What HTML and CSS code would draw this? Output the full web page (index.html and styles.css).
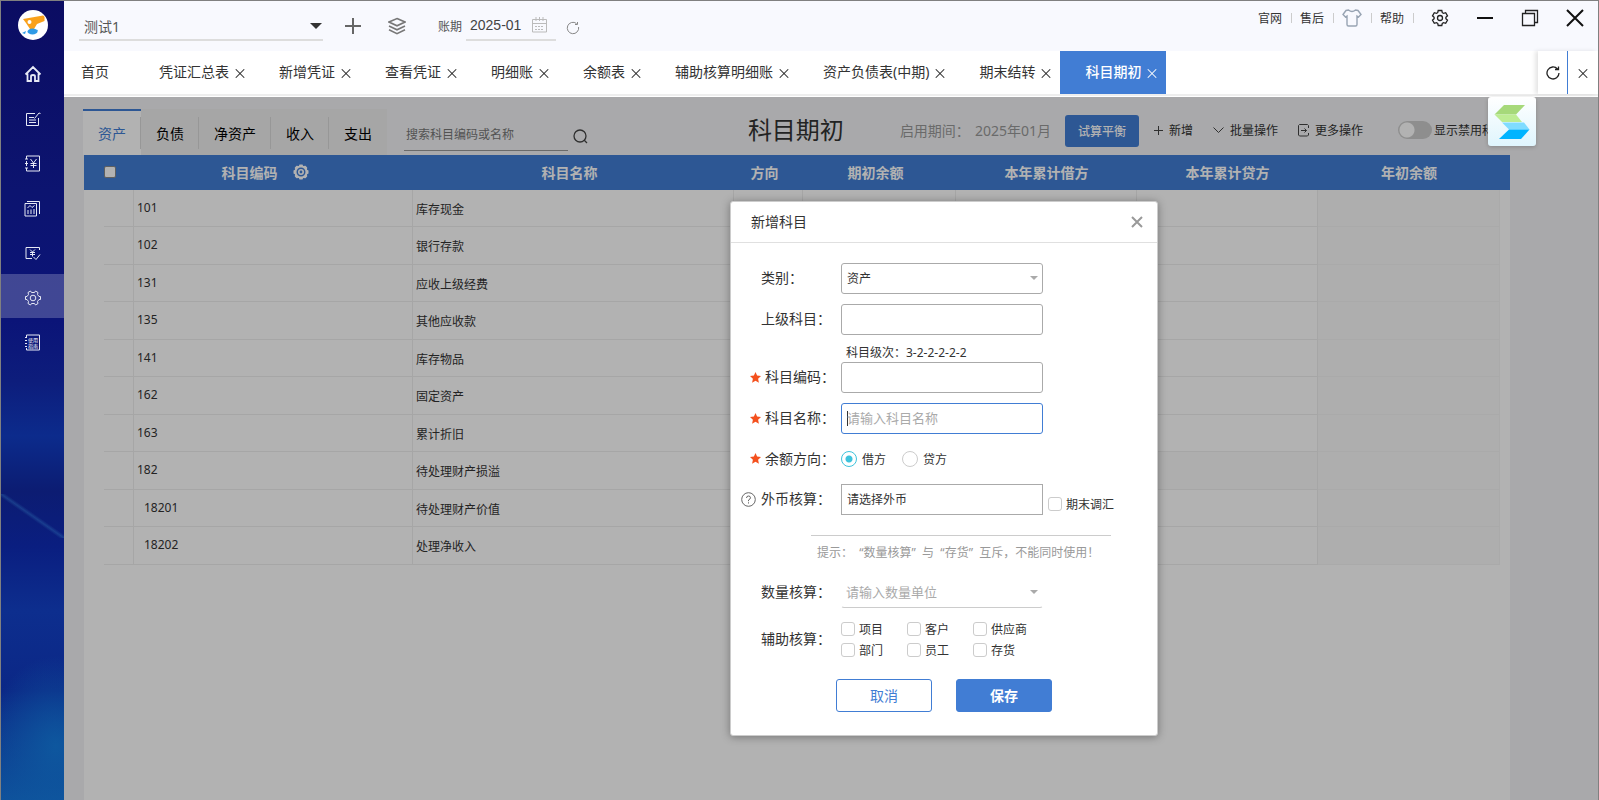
FILE: index.html
```html
<!DOCTYPE html>
<html lang="zh-CN">
<head>
  <meta charset="UTF-8">
  <meta name="viewport" content="width=device-width, initial-scale=1.0">
  <title>科目期初</title>
  <link rel="stylesheet" href="styles.css">
</head>
<body>
  <div class="app">
    <!-- 左侧导航 -->
    <aside class="sidebar">
      <a href="#" class="logo" aria-label="首页">
        <svg width="30" height="30" viewBox="0 0 30 30">
          <circle cx="15" cy="15" r="15" fill="#fff"/>
          <path d="M5 9 L25 5.5 Q27 6 26.5 9 L26.5 11 L19 14 L16 19 Q14 21 12 19 L8 13 Z" fill="#f9a11b"/>
          <circle cx="11.5" cy="12" r="2" fill="#fff"/>
          <ellipse cx="14.5" cy="21.5" rx="5" ry="3" fill="#2f9be6"/>
          <path d="M4 23 L8 21 L7 24 Z M15 19 L20 20 L18 23 Z" fill="#2f9be6"/>
        </svg>
      </a>
      <nav class="side-nav">
        <a href="#" aria-label="主页">
          <svg class="icon" width="18" height="18" viewBox="0 0 18 18" stroke-width="1.8"><path d="M1.5 9.5 L9 2 L16.500 9.500 M3.500 8.500 V16 H7 V11.500 Q7 10 9 10 Q11 10 11 11.500 V16 H14.500 V8.500"/></svg>
        </a>
        <a href="#" aria-label="凭证">
          <svg class="icon" width="16" height="16" viewBox="0 0 16 16"><path d="M10 2.500 H1.500 V14.500 H13.500 V7 M4 6.500 H9 M4 9 H11 M4 11.500 H11 M9.500 7.500 L14 2 L15.500 2.500"/></svg>
        </a>
        <a href="#" aria-label="账簿">
          <svg class="icon" width="17" height="17" viewBox="0 0 17 17"><path d="M2.500 4 V1 H15.500 V16 H2.500 V13 M2.500 6 V11 M1 4 H4 M1 8.500 H4 M1 13 H4 M6.500 4 L9.500 8 L12.500 4 M9.500 8 V13 M6.500 8.500 H12.500 M6.500 10.500 H12.500"/></svg>
        </a>
        <a href="#" aria-label="报表">
          <svg class="icon" width="17" height="17" viewBox="0 0 17 17"><path d="M1 3.500 H12.500 V16 H1 Z M3 1.500 H15.500 V14 M3.500 8 L6 5.500 L8 7.500 L10.500 5.500 M4 10 V14 M7 9.500 V14 M10 9 V14"/></svg>
        </a>
        <a href="#" aria-label="结账">
          <svg class="icon" width="17" height="17" viewBox="0 0 17 17"><path d="M8 13.500 H2 V2.500 H15.500 V5 M9.500 12 L12 14.500 L16 9.500 M6 4.500 L8.500 7 L11 4.500 M8.500 7 V11.500 M6 7.500 H11 M6 9.500 H11"/></svg>
        </a>
        <a href="#" class="active" aria-label="设置">
          <svg class="icon" width="18" height="18" viewBox="0 0 18 18"><path d="M6.500 2 L7.500 3.500 H10.500 L11.500 2 L14 3.500 L13.500 5.500 L15 7.500 H16.500 V10.500 H15 L13.500 12.500 L14 14.500 L11.500 16 L10.500 14.500 H7.500 L6.500 16 L4 14.500 L4.500 12.500 L3 10.500 H1.500 V7.500 H3 L4.500 5.500 L4 3.500 Z"/><circle cx="9" cy="9" r="2.800"/></svg>
        </a>
        <a href="#" aria-label="使用指南">
          <svg class="icon" width="17" height="17" viewBox="0 0 17 17"><path d="M2.500 3 V1 H15.500 V16 H2.500 V14 M1 3.500 H3 M1 6.500 H3 M1 9.500 H3 M1 12.500 H3"/><text x="4" y="7.500">使用</text><text x="4" y="13.500">指南</text></svg>
        </a>
      </nav>
    </aside>

    <div class="main">
      <!-- 顶栏 -->
      <header class="topbar">
        <label class="account-select">
          <select aria-label="账套"><option>测试1</option></select>
        </label>
        <button class="icon-btn add-btn" aria-label="新建">
          <svg width="16" height="16" viewBox="0 0 16 16" stroke="#666" stroke-width="2"><path d="M8 0 V16 M0 8 H16"/></svg>
        </button>
        <button class="icon-btn layer-btn" aria-label="账套列表">
          <svg width="18" height="18" viewBox="0 0 18 18" fill="none" stroke="#777" stroke-width="1.6"><path d="M9 1.500 L17 5 L9 8.800 L1 5 Z M1 9 L9 12.800 L17 9 M1 12.800 L9 16.600 L17 12.800"/></svg>
        </button>
        <label class="period-label" for="period">账期</label>
        <div class="period">
          <input id="period" type="text" value="2025-01">
          <svg width="15" height="16" viewBox="0 0 15 16" fill="none" stroke="#bbb"><path d="M0.500 2.500 H14.500 V15 H0.500 Z M0.500 6.500 H14.500 M4 0 V4 M7.500 0 V4 M11 0 V4"/><path d="M3 9.500 H12 M3 12.500 H12" stroke-dasharray="2 1"/></svg>
        </div>
        <button class="icon-btn reload-btn" aria-label="刷新账期">
          <svg width="14" height="14" viewBox="0 0 14 14" fill="none" stroke="#888"><path d="M10.500 2.500 A5.700 5.700 0 1 0 12.600 6 M9 3.500 H11.500 V1"/></svg>
        </button>
        <div class="top-links">
          <a href="#">官网</a>
          <a href="#">售后</a>
          <a href="#" aria-label="换肤"><svg width="20" height="18" viewBox="0 0 20 18" fill="none" stroke="#98a4b3" stroke-width="1.400"><path d="M6.500 1 Q10 4 13.500 1 L16 1.500 L19 5.500 L16.500 8 L15 7 V15.500 Q15 17 13.500 17 H6.500 Q5 17 5 15.500 V7 L3.500 8 L1 5.500 L4 1.500 Z"/></svg></a>
          <a href="#">帮助</a>
        </div>
        <div class="window-btns">
          <button class="icon-btn" aria-label="设置">
            <svg width="18" height="18" viewBox="0 0 18 18" fill="none" stroke="#222" stroke-width="1.300"><path d="M7.200 1.500 H10.800 L11.300 3.700 L12.500 4.400 L14.700 3.700 L16.500 6.800 L14.900 8.300 V9.700 L16.500 11.200 L14.700 14.300 L12.500 13.600 L11.300 14.300 L10.800 16.500 H7.200 L6.700 14.300 L5.500 13.600 L3.300 14.300 L1.500 11.200 L3.100 9.700 V8.300 L1.500 6.800 L3.300 3.700 L5.500 4.400 L6.700 3.700 Z"/><circle cx="9" cy="9" r="2.500"/></svg>
          </button>
          <button class="icon-btn" aria-label="最小化">
            <svg width="18" height="18" viewBox="0 0 18 18" stroke="#111" stroke-width="2"><path d="M1 9 H17"/></svg>
          </button>
          <button class="icon-btn" aria-label="还原">
            <svg width="18" height="18" viewBox="0 0 18 18" fill="none" stroke="#222" stroke-width="1.300"><path d="M1.500 4.500 H13.500 V16.500 H1.500 Z M4.500 4.500 V1.500 H16.500 V13.500 H13.500"/></svg>
          </button>
          <button class="icon-btn" aria-label="关闭">
            <svg width="18" height="18" viewBox="0 0 18 18" stroke="#111" stroke-width="2"><path d="M1 1 L17 17 M17 1 L1 17"/></svg>
          </button>
        </div>
      </header>

      <!-- 页签 -->
      <div class="tabs">
        <div class="tab home"><a href="#">首页</a></div>
        <div class="tab"><a href="#">凭证汇总表</a><button class="close" aria-label="关闭"></button></div>
        <div class="tab"><a href="#">新增凭证</a><button class="close" aria-label="关闭"></button></div>
        <div class="tab"><a href="#">查看凭证</a><button class="close" aria-label="关闭"></button></div>
        <div class="tab"><a href="#">明细账</a><button class="close" aria-label="关闭"></button></div>
        <div class="tab"><a href="#">余额表</a><button class="close" aria-label="关闭"></button></div>
        <div class="tab"><a href="#">辅助核算明细账</a><button class="close" aria-label="关闭"></button></div>
        <div class="tab"><a href="#">资产负债表(中期)</a><button class="close" aria-label="关闭"></button></div>
        <div class="tab"><a href="#">期末结转</a><button class="close" aria-label="关闭"></button></div>
        <div class="tab current"><a href="#">科目期初</a><button class="close" aria-label="关闭"></button></div>
        <div class="tab-tools">
          <button class="icon-btn" aria-label="刷新">
            <svg width="14" height="14" viewBox="0 0 14 14" fill="none" stroke="#222" stroke-width="1.300"><path d="M11.500 3 A6 6 0 1 0 13 7 M9 3.500 H12.500 V0.500"/></svg>
          </button>
          <button class="close close-all" aria-label="关闭全部"></button>
        </div>
      </div>

      <div class="content">
        <div class="toolbar">
          <div class="type-tabs">
            <button class="on">资产</button>
            <button>负债</button>
            <button>净资产</button>
            <button>收入</button>
            <button>支出</button>
          </div>
          <input class="search" type="text" placeholder="搜索科目编码或名称" aria-label="搜索">
          <button class="icon-btn search-btn" aria-label="搜索">
            <svg width="15" height="15" viewBox="0 0 15 15" fill="none" stroke="#444" stroke-width="1.300"><circle cx="7" cy="7" r="6"/><path d="M11 11 L14 14"/></svg>
          </button>
          <h1>科目期初</h1>
          <div class="start-period">启用期间：<span>2025年01月</span></div>
          <button class="balance-btn">试算平衡</button>
          <button class="action">
            <svg width="9" height="9" viewBox="0 0 9 9" stroke="#444"><path d="M4.500 0 V9 M0 4.500 H9"/></svg>新增
          </button>
          <button class="action">
            <svg width="11" height="7" viewBox="0 0 11 7" fill="none" stroke="#444"><path d="M0.500 0.500 L5.500 5.500 L10.500 0.500"/></svg>批量操作
          </button>
          <button class="action">
            <svg width="11" height="13" viewBox="0 0 11 13" fill="none" stroke="#444"><path d="M10.500 4 V1.500 L9.500 0.500 H1.500 L0.500 1.500 V11 L1.500 12 H9.500 L10.500 11 V9 M3 6.500 H8.500 M6.500 4.500 L8.500 6.500 L6.500 8.500"/></svg>更多操作
          </button>
          <label class="switch"><input type="checkbox">显示禁用科目</label>
        </div>

        <div class="panel">
          <table>
            <colgroup>
              <col class="c-gap"><col class="c-check"><col class="c-code"><col><col class="c-dir">
              <col class="c-open"><col class="c-sum"><col class="c-sum"><col class="c-year"><col class="c-end">
            </colgroup>
            <thead>
              <tr>
                <th></th>
                <th class="check"><input type="checkbox" aria-label="全选"></th>
                <th><span class="code-head">科目编码
                  <svg width="16" height="16" viewBox="0 0 16 16" fill="#fff"><path fill-rule="evenodd" d="M6.500 0.500 H9.500 L10.200 2 L12.500 1.800 L14.200 3.500 L14 5.800 L15.500 6.500 V9.500 L14 10.200 L14.200 12.500 L12.500 14.200 L10.200 14 L9.500 15.500 H6.500 L5.800 14 L3.500 14.200 L1.800 12.500 L2 10.200 L0.500 9.500 V6.500 L2 5.800 L1.800 3.500 L3.500 1.800 L5.800 2 Z M8 3.500 A4.500 4.500 0 1 0 8 12.500 A4.500 4.500 0 1 0 8 3.500 Z"/><circle cx="8" cy="8" r="2.200" fill="none" stroke="#fff" stroke-width="1.600"/></svg></span></th>
                <th class="shift">科目名称</th>
                <th class="shift">方向</th>
                <th class="shift">期初余额</th>
                <th>本年累计借方</th>
                <th>本年累计贷方</th>
                <th>年初余额</th>
                <th></th>
              </tr>
            </thead>
            <tbody>
              <tr><td></td><td></td><td>101</td><td>库存现金</td><td></td><td></td><td></td><td></td><td></td><td></td></tr>
              <tr><td></td><td></td><td>102</td><td>银行存款</td><td></td><td></td><td></td><td></td><td></td><td></td></tr>
              <tr><td></td><td></td><td>131</td><td>应收上级经费</td><td></td><td></td><td></td><td></td><td></td><td></td></tr>
              <tr><td></td><td></td><td>135</td><td>其他应收款</td><td></td><td></td><td></td><td></td><td></td><td></td></tr>
              <tr><td></td><td></td><td>141</td><td>库存物品</td><td></td><td></td><td></td><td></td><td></td><td></td></tr>
              <tr><td></td><td></td><td>162</td><td>固定资产</td><td></td><td></td><td></td><td></td><td></td><td></td></tr>
              <tr><td></td><td></td><td>163</td><td>累计折旧</td><td></td><td></td><td></td><td></td><td></td><td></td></tr>
              <tr class="parent"><td></td><td></td><td>182</td><td>待处理财产损溢</td><td></td><td></td><td></td><td></td><td></td><td></td></tr>
              <tr class="child"><td></td><td></td><td>18201</td><td>待处理财产价值</td><td></td><td></td><td></td><td></td><td></td><td></td></tr>
              <tr class="child"><td></td><td></td><td>18202</td><td>处理净收入</td><td></td><td></td><td></td><td></td><td></td><td></td></tr>
            </tbody>
          </table>
        </div>

        <div class="mask"></div>

        <!-- 新增科目弹窗 -->
        <form class="dialog" role="dialog" aria-label="新增科目">
          <div class="dialog-head">
            <span>新增科目</span>
            <button type="button" class="icon-btn" aria-label="关闭">
              <svg width="12" height="12" viewBox="0 0 12 12" stroke="#999" stroke-width="2"><path d="M1 1 L11 11 M11 1 L1 11"/></svg>
            </button>
          </div>
          <div class="dialog-body">
            <div class="row">
              <label class="name" for="kind">类别：</label>
              <span class="drop"><select id="kind" class="field"><option>资产</option></select></span>
            </div>
            <div class="row">
              <label class="name" for="parent">上级科目：</label>
              <input id="parent" class="field" type="text">
            </div>
            <div>
              <p class="level">科目级次：3-2-2-2-2-2</p>
              <div class="row">
                <label class="name must" for="code"><svg width="11" height="11" viewBox="0 0 11 11" fill="#f4511e"><path d="M5.500 0 L7.100 3.600 L11 4 L8.100 6.700 L8.900 10.700 L5.500 8.700 L2.100 10.700 L2.900 6.700 L0 4 L3.900 3.600 Z"/></svg>科目编码：</label>
                <input id="code" class="field" type="text">
              </div>
            </div>
            <div class="row">
              <label class="name must" for="title"><svg width="11" height="11" viewBox="0 0 11 11" fill="#f4511e"><path d="M5.500 0 L7.100 3.600 L11 4 L8.100 6.700 L8.900 10.700 L5.500 8.700 L2.100 10.700 L2.900 6.700 L0 4 L3.900 3.600 Z"/></svg>科目名称：</label>
              <input id="title" class="field" type="text" placeholder="请输入科目名称" autofocus>
            </div>
            <div class="row direction">
              <span class="name must"><svg width="11" height="11" viewBox="0 0 11 11" fill="#f4511e"><path d="M5.500 0 L7.100 3.600 L11 4 L8.100 6.700 L8.900 10.700 L5.500 8.700 L2.100 10.700 L2.900 6.700 L0 4 L3.900 3.600 Z"/></svg>余额方向：</span>
              <label class="radio"><input type="radio" name="dir" checked>借方</label>
              <label class="radio"><input type="radio" name="dir">贷方</label>
            </div>
            <div class="row">
              <label class="name help" for="currency"><svg width="15" height="15" viewBox="0 0 15 15" fill="none" stroke="#666"><circle cx="7.500" cy="7.500" r="6.800"/><path d="M5.500 6 Q5.500 4 7.500 4 Q9.500 4 9.500 5.800 Q9.500 7 7.500 8 V9.200 M7.500 10.300 V11.500"/></svg>外币核算：</label>
              <select id="currency" class="field square"><option>请选择外币</option></select>
              <label class="check-item adjust"><input type="checkbox">期末调汇</label>
            </div>
            <p class="hint">提示：&nbsp; “数量核算”&nbsp; 与&nbsp; “存货”&nbsp; 互斥，不能同时使用！</p>
            <div class="row">
              <label class="name" for="unit">数量核算：</label>
              <span class="drop"><input id="unit" class="field line" type="text" placeholder="请输入数量单位"></span>
            </div>
            <div class="row">
              <span class="name">辅助核算：</span>
              <div class="aux">
                <label class="check-item"><input type="checkbox">项目</label>
                <label class="check-item"><input type="checkbox">客户</label>
                <label class="check-item"><input type="checkbox">供应商</label>
                <label class="check-item"><input type="checkbox">部门</label>
                <label class="check-item"><input type="checkbox">员工</label>
                <label class="check-item"><input type="checkbox">存货</label>
              </div>
            </div>
            <div class="dialog-btns">
              <button type="button" class="btn">取消</button>
              <button type="button" class="btn primary">保存</button>
            </div>
          </div>
        </form>

        <!-- 右上角悬浮图标 -->
        <button class="float-logo" aria-label="助手">
          <svg width="36" height="34" viewBox="0 0 36 34">
            <path d="M10 0 H31 L22 9.500 H0.500 Z" fill="#a6d97a"/>
            <path d="M0.500 9.500 H22 L28 17 H8 Z" fill="#bdec93"/>
            <path d="M8 17.500 H30 L35.500 24.500 H15 Z" fill="#80dcff"/>
            <path d="M15 24.500 H35.500 L27 34 H5 Z" fill="#00b4ff"/>
          </svg>
        </button>
      </div>
    </div>
  </div>
</body>
</html>
```
FILE: styles.css
```css
* {
  box-sizing: border-box;
}

body {
  margin: 0;
  overflow: hidden;
  font-family: "Noto Sans", "Noto Sans CJK SC", sans-serif;
  font-size: 12px;
  color: #333;
}

button, input, select {
  font: inherit;
  color: inherit;
  margin: 0;
}

button {
  padding: 0;
  border: none;
  background: none;
  cursor: pointer;
}

a {
  color: inherit;
  text-decoration: none;
}

p {
  margin: 0;
}

.icon-btn {
  display: flex;
  align-items: center;
  justify-content: center;
}

.app {
  display: flex;
  height: 100vh;
  border: 1px solid #808080;
  border-bottom: none;
}

/* 左侧导航 */
.sidebar {
  width: 63px;
  flex-shrink: 0;
  padding-top: 9px;
  background:
    linear-gradient(to top right, transparent 46%, rgba(50, 120, 180, 0.35) 50%, transparent 54%) 0 493px / 63px 44px no-repeat,
    radial-gradient(ellipse 70px 90px at 55px 745px, rgba(14, 90, 160, 0.9), rgba(14, 80, 160, 0)),
    linear-gradient(to bottom,
      #0b0c62 0,
      #0c1470 190px,
      #0b1478 320px,
      #0d1d7c 380px,
      #0c2b8c 435px,
      #0c1c72 490px,
      #0a1e80 545px,
      #0d2e8e 610px,
      #0b2786 690px,
      #0e529c 800px);
}

.logo {
  display: flex;
  justify-content: center;
}

.side-nav {
  display: flex;
  flex-direction: column;
  padding-top: 10px;
}

.side-nav a {
  display: flex;
  align-items: center;
  justify-content: center;
  height: 45px;
  padding-top: 3px;
}

.side-nav a:nth-child(3n) {
  height: 44px;
}

.side-nav a.active {
  background: rgba(255, 255, 255, 0.22);
}

.icon {
  fill: none;
  stroke: #e6e9f5;
}

.icon text {
  font-size: 5px;
  fill: #fff;
  stroke: none;
}

.main {
  flex: 1;
  min-width: 0;
  display: flex;
  flex-direction: column;
}

/* 顶栏 */
.topbar {
  display: flex;
  height: 50px;
  padding-left: 15px;
  background: #f8f9fe;
}

.account-select {
  position: relative;
  width: 244px;
  height: 40px;
  border-bottom: 2px solid #ddd;
}

.account-select::after {
  content: '';
  position: absolute;
  right: 1px;
  top: 22px;
  border: 6px solid transparent;
  border-top-color: #333;
  border-bottom: none;
}

.account-select select {
  appearance: none;
  width: 100%;
  height: 38px;
  padding: 12px 5px 0;
  border: none;
  background: none;
  font-size: 14px;
  color: #555;
}

.add-btn {
  width: 16px;
  height: 50px;
  margin-left: 22px;
}

.layer-btn {
  width: 18px;
  height: 50px;
  margin-left: 27px;
}

.period-label {
  margin-left: 32px;
  line-height: 52px;
  color: #555;
}

.period {
  display: flex;
  align-items: center;
  width: 90px;
  height: 40px;
  margin-left: 4px;
  padding: 10px 9px 0 4px;
  border-bottom: 2px solid #ddd;
}

.period input {
  flex: 1;
  min-width: 0;
  padding: 0;
  border: none;
  background: none;
  font-family: "Liberation Sans", sans-serif;
  font-size: 14px;
  color: #444;
}

.reload-btn {
  height: 54px;
  margin-left: 10px;
}

.top-links {
  display: flex;
  align-items: center;
  height: 33px;
  margin-left: auto;
}

.top-links a {
  display: flex;
  align-items: center;
  height: 10px;
  padding: 0 9px 0 8px;
  border-right: 1px solid #ccc;
}

.window-btns {
  display: flex;
  gap: 27px;
  height: 33px;
  margin: 0 14px 0 17px;
}

/* 页签 */
.tabs {
  display: flex;
  height: 46px;
  padding-bottom: 3px;
  background: linear-gradient(#fff 43px, #eee 43px, #eee 45px, #fff 45px);
  font-size: 14px;
}

.tab {
  display: flex;
  align-items: center;
  gap: 6px;
  padding: 0 9px 0 25px;
}

.tab a {
  padding-bottom: 3px;
}

.tab.home {
  padding-left: 17px;
  padding-right: 25px;
}

.tab.current {
  background: #417dd4;
  color: #fff;
  font-weight: 500;
}

.close {
  position: relative;
  width: 10px;
  height: 10px;
  color: #222;
}

.close::before,
.close::after {
  content: '';
  position: absolute;
  left: -1px;
  top: 5px;
  width: 12px;
  height: 1px;
  background: currentColor;
  transform: rotate(45deg);
}

.close::after {
  transform: rotate(-45deg);
}

.tab.current .close {
  color: #fff;
}

.tab-tools {
  display: flex;
  align-items: center;
  width: 60px;
  margin-left: auto;
  box-shadow: -3px 0 4px rgba(0, 0, 0, 0.1);
}

.tab-tools .icon-btn {
  width: 30px;
  height: 43px;
  border-right: 1px solid #417dd4;
}

.close-all {
  margin-left: 10px;
}

/* 内容区 */
.content {
  position: relative;
  flex: 1;
  display: flex;
  flex-direction: column;
  background: #f2f3f5;
}

.toolbar {
  display: flex;
  align-items: center;
  height: 58px;
  padding: 0 92px 0 19px;
  white-space: nowrap;
}

.type-tabs {
  display: flex;
  align-self: flex-end;
  height: 46px;
  background: #eee;
}

.type-tabs button {
  display: flex;
  align-items: center;
  padding: 2px 15px 0;
  font-size: 14px;
  color: #000;
}

.type-tabs button::after {
  content: '';
  align-self: center;
  width: 1px;
  height: 32px;
  margin-right: -15px;
  margin-left: 14px;
  background: #d8d8d8;
}

.type-tabs button:last-child::after {
  background: none;
}

.type-tabs .on {
  padding-top: 0;
  border-top: 2px solid #417dd4;
  background: #fff;
  color: #417dd4;
}

.search {
  width: 164px;
  height: 37px;
  margin: 12px 0 0 17px;
  padding: 5px 2px 0;
  border: none;
  border-bottom: 1px solid #999;
  background: none;
}

.search::placeholder {
  color: #777;
}

.search-btn {
  margin: 21px 0 0 5px;
}

h1 {
  margin: 4px 0 0 auto;
  font-size: 24px;
  font-weight: normal;
}

.start-period {
  margin: 8px 14px 0 56px;
  font-size: 14px;
  color: #999;
}

.start-period span {
  margin-left: 5px;
}

.balance-btn {
  width: 74px;
  height: 32px;
  margin: 10px 0 0;
  border-radius: 3px;
  background: #417dd4;
  color: #fff;
  font-weight: 500;
}

.action {
  display: flex;
  align-items: center;
  gap: 6px;
  margin: 8px 5px 0 15px;
}

.switch {
  display: flex;
  align-items: center;
  gap: 2px;
  margin: 8px 0 0 30px;
}

.switch input {
  appearance: none;
  width: 34px;
  height: 18px;
  border-radius: 9px;
  background: radial-gradient(circle at 9px 9px, #fff 7px, #ccc 8px);
}

/* 科目表 */
.panel {
  flex: 1;
  margin: 0 88px 0 20px;
  background: #fff;
}

table {
  width: 100%;
  table-layout: fixed;
  border-collapse: separate;
  border-spacing: 0;
}

.c-gap { width: 20px; }
.c-check { width: 30px; }
.c-code { width: 279px; }
.c-dir { width: 69px; }
.c-open { width: 153px; }
.c-sum { width: 181px; }
.c-year { width: 182px; }
.c-end { width: 10px; }

th {
  height: 35px;
  padding: 0 0 2px;
  background: #417dd4;
  color: #fff;
  font-size: 14px;
}

th.shift {
  padding-right: 8px;
}

th.check {
  text-align: left;
}

th input {
  appearance: none;
  display: block;
  width: 12px;
  height: 12px;
  border: 1px solid #888;
  border-radius: 2px;
  background: #fff;
}

.code-head {
  display: flex;
  align-items: center;
  justify-content: center;
  gap: 15px;
  padding-right: 17px;
}

td {
  height: 37px;
  padding: 0 3px;
  border-right: 1px solid #eee;
  border-bottom: 1px solid #eee;
}

tr:nth-child(even) td {
  height: 38px;
}

td:first-child,
td:last-child {
  border: none;
}

td:nth-child(3) {
  padding-bottom: 2px;
}

td:nth-child(4) {
  padding-top: 1px;
}

td:nth-child(9) {
  border-color: #f4f4f4;
  background: #f9f9f9;
}

.parent td:nth-child(n+5):nth-child(-n+9) {
  background: #f9f9f9;
}

.child td:nth-child(3) {
  padding-left: 10px;
}

.mask {
  position: absolute;
  inset: 0;
  background: rgba(0, 0, 0, 0.3);
}

.float-logo {
  position: absolute;
  top: 0;
  right: 62px;
  display: flex;
  align-items: center;
  justify-content: center;
  width: 48px;
  height: 49px;
  border-radius: 3px;
  background: linear-gradient(#fff, #dff5fd);
  box-shadow: 0 1px 4px rgba(0, 0, 0, 0.2);
}

/* 弹窗 */
.dialog {
  position: absolute;
  left: calc(50% - 101px);
  top: 104px;
  width: 428px;
  border: 1px solid #ccc;
  border-radius: 3px;
  background: #fff;
  box-shadow: 0 1px 8px rgba(0, 0, 0, 0.35);
}

.dialog-head {
  display: flex;
  align-items: center;
  justify-content: space-between;
  height: 41px;
  padding: 0 14px 0 20px;
  border-bottom: 1px solid #e0e0e0;
  font-size: 14px;
}

.dialog-head span {
  padding-bottom: 2px;
}

.dialog-body {
  display: flex;
  flex-direction: column;
  gap: 10px;
  padding: 20px 0 23px 10px;
}

.row {
  display: flex;
  align-items: center;
  min-height: 31px;
}

.row.direction {
  min-height: 30px;
}

.name {
  display: flex;
  align-items: center;
  width: 100px;
  padding: 0 0 3px 20px;
  font-size: 14px;
}

.name.must {
  gap: 4px;
  padding-left: 9px;
}

.name.help {
  gap: 5px;
  padding-left: 0;
}

.name svg {
  margin-top: 2px;
}

.field {
  appearance: none;
  display: block;
  width: 202px;
  height: 31px;
  padding: 0 5px;
  border: 1px solid #aaa;
  border-radius: 3px;
  background: #fff;
  outline: none;
}

.field:focus {
  border-color: #417dd4;
  background: linear-gradient(#333, #333) 5px center / 1px 15px no-repeat #fff;
  caret-color: transparent;
}

.field::placeholder {
  font-size: 13px;
  color: #aaa;
}

.field.square {
  border-radius: 0;
}

.field.line {
  padding: 0 4px;
  border-color: transparent transparent #ccc;
}

.drop {
  position: relative;
}

.drop::after {
  content: '';
  position: absolute;
  right: 5px;
  top: 13px;
  border: 4px solid transparent;
  border-top-color: #aaa;
  border-bottom: none;
}

.level {
  height: 17px;
  padding-left: 105px;
  line-height: 15px;
}

.radio {
  display: flex;
  align-items: center;
  gap: 5px;
  margin-right: 16px;
}

.radio input {
  appearance: none;
  width: 16px;
  height: 16px;
  border: 1px solid #ccc;
  border-radius: 50%;
}

.radio input:checked {
  border-color: #3ec3dc;
  background: radial-gradient(circle, #3ec3dc 3px, #fff 4px);
}

.check-item {
  display: flex;
  align-items: center;
  gap: 4px;
}

.check-item input {
  appearance: none;
  width: 14px;
  height: 14px;
  border: 1px solid #ccc;
  border-radius: 3px;
}

.adjust {
  margin: 9px 0 0 5px;
}

.hint {
  width: 300px;
  margin: 10px 0 5px 70px;
  padding: 8px 0 0 6px;
  border-top: 1px solid #ccc;
  line-height: 18px;
  color: #999;
  white-space: nowrap;
}

.aux {
  display: grid;
  grid-template-columns: repeat(3, 66px);
  grid-auto-rows: 21px;
}

.dialog-btns {
  display: flex;
  gap: 24px;
  margin: 9px 0 0 95px;
}

.btn {
  width: 96px;
  height: 33px;
  padding-bottom: 2px;
  border: 1px solid #417dd4;
  border-radius: 3px;
  background: #fff;
  color: #417dd4;
  font-size: 14px;
}

.btn.primary {
  background: #417dd4;
  color: #fff;
  font-weight: bold;
}
```
